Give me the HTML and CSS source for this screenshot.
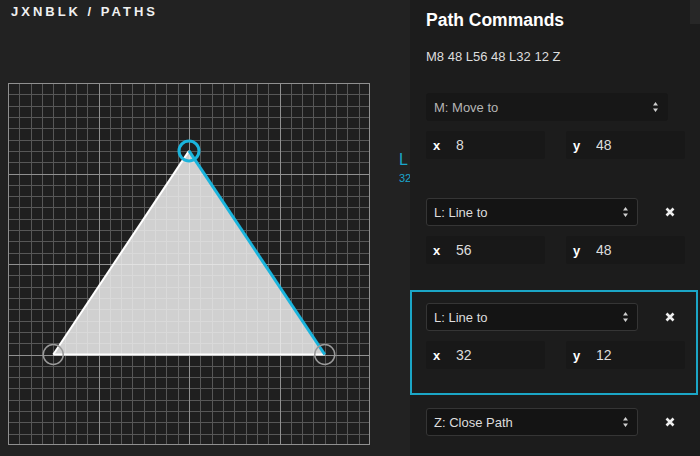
FILE: index.html
```html
<!DOCTYPE html>
<html lang="en">
<head>
  <meta charset="UTF-8">
  <meta name="viewport" content="width=device-width, initial-scale=1.0">
  <title>JXNBLK / Paths</title>
  <link rel="stylesheet" href="styles.css">
</head>
<body>
  <div class="stage">
    <h1 class="brand">JXNBLK / PATHS</h1>

    <svg class="canvas" id="canvas" width="362" height="362" viewBox="0 0 362 362">
      <rect class="canvas-bg" x="0" y="0" width="362" height="362"></rect>
      <path class="grid-minor" id="gridMinor" d=""></path>
      <path class="grid-major" id="gridMajor" d=""></path>
      <rect class="canvas-border" x="0.5" y="0.5" width="361" height="361"></rect>
      <polygon class="shape" points="45.25,271.5 316.75,271.5 181,67.9"></polygon>
      <line class="seg" x1="45.25" y1="271.5" x2="316.75" y2="271.5"></line>
      <line class="seg" x1="181" y1="67.9" x2="45.25" y2="271.5"></line>
      <line class="seg seg-active" x1="316.75" y1="271.5" x2="181" y2="67.9"></line>
      <circle class="handle" cx="45.25" cy="271.5" r="10"></circle>
      <circle class="handle" cx="316.75" cy="271.5" r="10"></circle>
      <circle class="handle handle-active" cx="181" cy="67.9" r="10"></circle>
    </svg>

    <div class="point-label">
      <span class="point-cmd">L</span>
      <span class="point-val">32, 12</span>
    </div>
  </div>

  <div class="panel">
    <div class="scroll-thumb"></div>
    <h2>Path Commands</h2>
    <p class="code">M8 48 L56 48 L32 12 Z</p>

    <div class="command">
      <div class="cmd-row">
        <div class="select select-wide select-muted">
          <span>M: Move to</span>
          <svg class="chevron" width="7" height="12" viewBox="0 0 7 12"><path d="M3.5 1 L6 4.5 H1 Z M3.5 11 L6 7.5 H1 Z"/></svg>
        </div>
      </div>
      <div class="fields">
        <label class="field"><b>x</b><input type="text" value="8"></label>
        <label class="field"><b>y</b><input type="text" value="48"></label>
      </div>
    </div>

    <div class="command">
      <div class="cmd-row">
        <div class="select">
          <span>L: Line to</span>
          <svg class="chevron" width="7" height="12" viewBox="0 0 7 12"><path d="M3.5 1 L6 4.5 H1 Z M3.5 11 L6 7.5 H1 Z"/></svg>
        </div>
        <button class="remove"><svg width="10" height="10" viewBox="0 0 10 10"><path d="M1.5 1.5 L8.5 8.5 M8.5 1.5 L1.5 8.5"/></svg></button>
      </div>
      <div class="fields">
        <label class="field"><b>x</b><input type="text" value="56"></label>
        <label class="field"><b>y</b><input type="text" value="48"></label>
      </div>
    </div>

    <div class="command active">
      <div class="cmd-row">
        <div class="select">
          <span>L: Line to</span>
          <svg class="chevron" width="7" height="12" viewBox="0 0 7 12"><path d="M3.5 1 L6 4.5 H1 Z M3.5 11 L6 7.5 H1 Z"/></svg>
        </div>
        <button class="remove"><svg width="10" height="10" viewBox="0 0 10 10"><path d="M1.5 1.5 L8.5 8.5 M8.5 1.5 L1.5 8.5"/></svg></button>
      </div>
      <div class="fields">
        <label class="field"><b>x</b><input type="text" value="32"></label>
        <label class="field"><b>y</b><input type="text" value="12"></label>
      </div>
    </div>

    <div class="command">
      <div class="cmd-row">
        <div class="select">
          <span>Z: Close Path</span>
          <svg class="chevron" width="7" height="12" viewBox="0 0 7 12"><path d="M3.5 1 L6 4.5 H1 Z M3.5 11 L6 7.5 H1 Z"/></svg>
        </div>
        <button class="remove"><svg width="10" height="10" viewBox="0 0 10 10"><path d="M1.5 1.5 L8.5 8.5 M8.5 1.5 L1.5 8.5"/></svg></button>
      </div>
    </div>
  </div>

  <script>
    // Build the grid: a line every 2 units, a strong one every 16 (64 x 64 units)
    const size = 362;
    const unit = size / 64;
    let minor = '';
    let major = '';
    for (let i = 2; i < 64; i += 2) {
      const p = Math.round(i * unit) + 0.5;
      const seg = `M${p} 0V${size}M0 ${p}H${size}`;
      if (i % 16 === 0) {
        major += seg;
      } else {
        minor += seg;
      }
    }
    document.getElementById('gridMinor').setAttribute('d', minor);
    document.getElementById('gridMajor').setAttribute('d', major);
  </script>
</body>
</html>
```

FILE: styles.css
```css
html, body {
  margin: 0;
  padding: 0;
  height: 100%;
}
body {
  display: flex;
  width: 700px;
  height: 456px;
  overflow: hidden;
  background-color: #222222;
  font-family: "Liberation Sans", Arial, sans-serif;
  color: #e6e6e6;
}
.stage {
  position: relative;
  flex: none;
  width: 410px;
  height: 456px;
  padding: 5px 0 0 8px;
  box-sizing: border-box;
  overflow: hidden;
  background-color: #222222;
}
.brand {
  margin: 0 0 0 3px;
  font-size: 13px;
  line-height: 13px;
  font-weight: bold;
  letter-spacing: 3px;
  color: #f0f0f0;
}
.canvas {
  display: block;
  margin-top: 65px;
}
.canvas-bg {
  fill: #1f1f1f;
}
.grid-minor {
  stroke: #575757;
  stroke-width: 1;
  fill: none;
}
.grid-major {
  stroke: #909090;
  stroke-width: 1;
  fill: none;
}
.canvas-border {
  fill: none;
  stroke: #909090;
  stroke-width: 1;
}
.shape {
  fill: rgba(240, 240, 240, 0.85);
}
.seg {
  stroke: #ffffff;
  stroke-width: 2;
}
.seg-active {
  stroke: #1ab4dc;
  stroke-width: 3;
}
.handle {
  fill: none;
  stroke: #9a9a9a;
  stroke-width: 1.5;
}
.handle-active {
  stroke: #1ab4dc;
  stroke-width: 3;
}
.point-label {
  position: absolute;
  left: 399px;
  top: 152px;
  color: #1aa6cc;
  line-height: 1;
  white-space: nowrap;
}
.point-cmd {
  display: block;
  font-size: 16px;
}
.point-val {
  display: block;
  margin-top: 5px;
  font-size: 11px;
}
.panel {
  position: relative;
  flex: none;
  width: 290px;
  height: 456px;
  padding-top: 10px;
  box-sizing: border-box;
  background-color: #1c1c1c;
}
.scroll-thumb {
  position: absolute;
  right: 0;
  top: 0;
  width: 10px;
  height: 24px;
  background-color: #272727;
}
.panel h2 {
  margin: 0 0 0 16px;
  font-size: 17.5px;
  line-height: 20px;
  font-weight: bold;
  color: #ffffff;
}
.code {
  margin: 19px 0 15px 16px;
  font-size: 13px;
  line-height: 16px;
  color: #dddddd;
}
.command {
  width: 288px;
  box-sizing: border-box;
  padding: 11px 11px 24px 14px;
  border: 2px solid transparent;
}
.command.active {
  border-color: #1ba6c6;
}
.cmd-row {
  display: flex;
  align-items: center;
}
.select {
  display: flex;
  align-items: center;
  justify-content: space-between;
  width: 212px;
  height: 28px;
  box-sizing: border-box;
  padding: 0 8px 0 7px;
  border: 1px solid #353535;
  border-radius: 3px;
  background-color: #141414;
  font-size: 13px;
  color: #dddddd;
}
.select-wide {
  width: 242px;
}
.select-muted {
  border-color: #171717;
  background-color: #171717;
  color: #b5b5b5;
}
.chevron {
  fill: #cfcfcf;
}
.remove {
  margin-left: 20px;
  width: 24px;
  height: 24px;
  padding: 0;
  border: none;
  background: none;
  display: flex;
  align-items: center;
  justify-content: center;
  cursor: pointer;
}
.remove svg {
  stroke: #eeeeee;
  stroke-width: 2.6;
  fill: none;
}
.fields {
  display: grid;
  grid-template-columns: 119px 119px;
  gap: 21px;
  margin-top: 10px;
}
.field {
  display: flex;
  align-items: center;
  height: 28px;
  padding-left: 7px;
  background-color: #181818;
  border-radius: 2px;
}
.field b {
  width: 16px;
  font-size: 13px;
  color: #ffffff;
}
.field input {
  width: 80px;
  margin-left: 7px;
  padding: 0;
  border: none;
  outline: none;
  background: transparent;
  font-family: "Liberation Sans", Arial, sans-serif;
  font-size: 14px;
  color: #dddddd;
}
```
